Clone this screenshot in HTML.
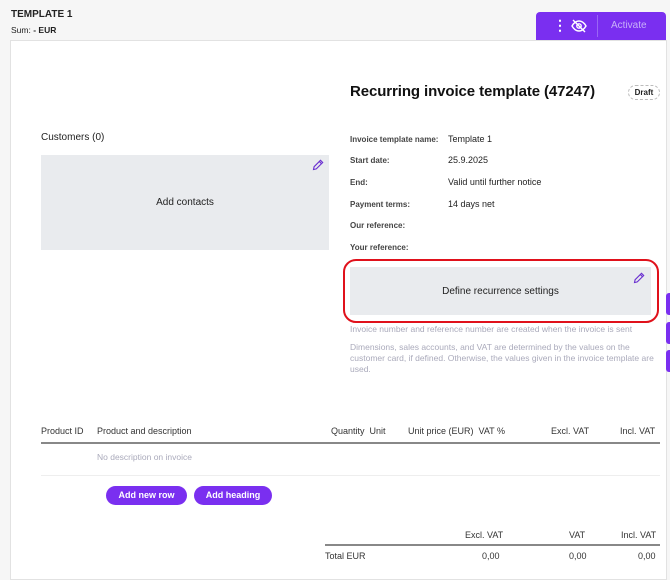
<!DOCTYPE html>
<html><head><style>
*{margin:0;padding:0;box-sizing:border-box}
body{width:670px;height:570px;overflow:hidden;background:#f6f6f6;font-family:"Liberation Sans",sans-serif;color:#222;position:relative}
.a{position:absolute;white-space:nowrap}
.card{position:absolute;left:10px;top:40px;width:657px;height:540px;background:#fff;border:1px solid #e2e2e2}
.lbl{font-size:8px;font-weight:bold;color:#444}
.val{font-size:9px;color:#222}
.th{font-size:9px;color:#333}
.btn{position:absolute;background:#7a2ff0;color:#fff;font-size:9px;font-weight:bold;border-radius:10px;height:19px;line-height:19px;text-align:center}
.grey{font-size:8.5px;color:#aab}
.tab{position:absolute;left:666px;width:6px;height:22px;background:#7a2ff0;border-radius:3px 0 0 3px}
</style></head><body>
<div class="a" style="left:11px;top:9px;font-size:10px;font-weight:bold">TEMPLATE 1</div>
<div class="a" style="left:11px;top:25px;font-size:8.5px">Sum: <b>- EUR</b></div>
<div class="card"></div>
<div class="a" style="left:536px;top:12px;width:130px;height:28px;background:#7a2ff0;border-radius:4px 4px 0 0"></div>
<div class="a" style="left:553px;top:18px;color:#fff;font-size:14px;font-weight:bold;line-height:14px">⋮</div>
<svg class="a" style="left:571px;top:18px" width="16" height="16" viewBox="0 0 16 16" fill="none" stroke="#fff" stroke-width="1.4"><path d="M1 8C3 4.5 5.5 3 8 3s5 1.5 7 5c-2 3.5-4.5 5-7 5S3 11.5 1 8z"/><circle cx="8" cy="8" r="2.2"/><path d="M2 2l12 12"/></svg>
<div class="a" style="left:597px;top:15px;width:1px;height:22px;background:#9a66f5"></div>
<div class="a" style="left:611px;top:20px;font-size:10px;color:#c9b2f9">Activate</div>
<div class="a" style="left:350px;top:83px;font-size:15px;font-weight:bold;color:#111;letter-spacing:-0.1px">Recurring invoice template (47247)</div>
<div class="a" style="left:628px;top:85px;width:32px;height:15px;border:1px dashed #bbb;border-radius:8px;font-size:8px;font-weight:bold;text-align:center;line-height:13px">Draft</div>
<div class="a" style="left:41px;top:132px;font-size:10px">Customers (0)</div>
<div class="a" style="left:41px;top:155px;width:288px;height:95px;background:#e9ebee"></div>
<div class="a" style="left:41px;top:197px;width:288px;text-align:center;font-size:10px">Add contacts</div>
<svg class="a" style="left:312px;top:159px" width="12" height="12" viewBox="0 0 12 12" fill="none" stroke="#6a2fd0" stroke-width="1.1"><path d="M1.5 10.5l.6-2.8L8.5 1.3l2.2 2.2-6.4 6.4zM7.3 2.5l2.2 2.2"/></svg>
<div class="a lbl" style="left:350px;top:135px">Invoice template name:</div><div class="a val" style="left:448px;top:134px">Template 1</div>
<div class="a lbl" style="left:350px;top:156px">Start date:</div><div class="a val" style="left:448px;top:155px">25.9.2025</div>
<div class="a lbl" style="left:350px;top:178px">End:</div><div class="a val" style="left:448px;top:177px">Valid until further notice</div>
<div class="a lbl" style="left:350px;top:200px">Payment terms:</div><div class="a val" style="left:448px;top:199px">14 days net</div>
<div class="a lbl" style="left:350px;top:221px">Our reference:</div>
<div class="a lbl" style="left:350px;top:243px">Your reference:</div>
<div class="a" style="left:343px;top:259px;width:316px;height:64px;border:2.5px solid #e0111b;border-radius:13px"></div>
<div class="a" style="left:350px;top:267px;width:301px;height:48px;background:#e9ebee"></div>
<div class="a" style="left:350px;top:286px;width:301px;text-align:center;font-size:10px">Define recurrence settings</div>
<svg class="a" style="left:633px;top:272px" width="12" height="12" viewBox="0 0 12 12" fill="none" stroke="#6a2fd0" stroke-width="1.1"><path d="M1.5 10.5l.6-2.8L8.5 1.3l2.2 2.2-6.4 6.4zM7.3 2.5l2.2 2.2"/></svg>
<div class="a grey" style="left:350px;top:324px">Invoice number and reference number are created when the invoice is sent</div>
<div class="a grey" style="left:350px;top:342px;line-height:11px;white-space:normal;width:310px">Dimensions, sales accounts, and VAT are determined by the values on the customer card, if defined. Otherwise, the values given in the invoice template are used.</div>
<div class="tab" style="top:293px"></div><div class="tab" style="top:322px"></div><div class="tab" style="top:350px"></div>
<div class="a th" style="left:41px;top:426px">Product ID</div>
<div class="a th" style="left:97px;top:426px">Product and description</div>
<div class="a th" style="left:331px;top:426px">Quantity&nbsp; Unit</div>
<div class="a th" style="left:408px;top:426px">Unit price (EUR)&nbsp; VAT %</div>
<div class="a th" style="left:551px;top:426px">Excl. VAT</div>
<div class="a th" style="left:620px;top:426px">Incl. VAT</div>
<div class="a" style="left:41px;top:442px;width:619px;height:2px;background:#888"></div>
<div class="a grey" style="left:97px;top:452px">No description on invoice</div>
<div class="a" style="left:41px;top:475px;width:619px;height:1px;background:#eee"></div>
<div class="btn" style="left:106px;top:486px;width:81px">Add new row</div>
<div class="btn" style="left:194px;top:486px;width:78px">Add heading</div>
<div class="a th" style="left:465px;top:530px">Excl. VAT</div>
<div class="a th" style="left:569px;top:530px">VAT</div>
<div class="a th" style="left:621px;top:530px">Incl. VAT</div>
<div class="a" style="left:325px;top:544px;width:335px;height:2px;background:#888"></div>
<div class="a th" style="left:325px;top:551px">Total EUR</div>
<div class="a th" style="left:482px;top:551px">0,00</div>
<div class="a th" style="left:569px;top:551px">0,00</div>
<div class="a th" style="left:638px;top:551px">0,00</div>
</body></html>
